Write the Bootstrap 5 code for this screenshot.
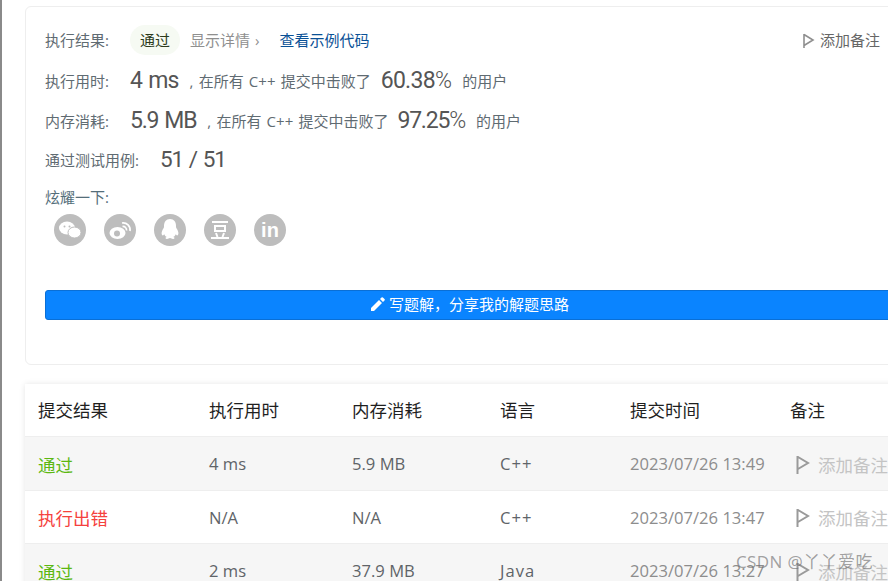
<!DOCTYPE html>
<html lang="zh-CN">
<head>
  <meta charset="UTF-8" />
  <meta name="viewport" content="width=device-width, initial-scale=1.0"/>
  <title>提交记录</title>
  <link href="https://cdn.jsdelivr.net/npm/bootstrap@5.3.3/dist/css/bootstrap.min.css" rel="stylesheet">
  <style>
    html, body { height: 581px; overflow: hidden; }
    body { background: #fff; font-family: "Open Sans", "Noto Sans CJK SC", sans-serif; color: #546e7a; font-size: 15px; border-left: 2px solid #8a8a8a; }
    .pagina { width: 1000px; margin-left: 23px; padding-top: 6px; position: relative; }
    .resultado { height: 359px; border: 1px solid #eeeeee; border-radius: 6px; padding: 13px 19px 0; }
    .fila { height: 40px; color: #5f6b72; }
    .fila-alta { padding-top: 2px; }
    .etiqueta { width: 85px; flex: none; }
    .etiqueta-larga { width: 115px; flex: none; }
    .dato { font-family: "Roboto", sans-serif; font-size: 23px; letter-spacing: -.9px; word-spacing: 1.500px; color: #555; }
    .dato.corto { font-size: 22.500px; letter-spacing: -1.200px; }
    .dato.mem { letter-spacing: -1.200px; }
    .pct { font-family: "Roboto", sans-serif; font-size: 23px; letter-spacing: -.7px; color: #555; margin: 0 11px 0 10px; }
    .pct.mem { letter-spacing: -1.200px; margin-left: 9px; }
    .pct i { font-style: normal; font-weight: 300; }
    .frase { margin-left: 11px; word-spacing: 1.300px; }
    .pastilla { background: #f6faf3; color: #2c3a1c; border-radius: 15px; width: 50px; height: 30px; line-height: 30px; text-align: center; }
    .detalle { color: #8f8f8f; margin-left: 10px; word-spacing: 1px; }
    .ejemplo { color: #0a5196; margin-left: 20px; }
    .nota { color: #666; margin-left: auto; margin-right: 125px; }
    .social { gap: 18px; padding-left: 9px; margin-top: 5px; }
    .presume { margin-top: 6px; }
    .circulo { width: 32px; height: 32px; border-radius: 50%; background: #bdbdbd; color: #fff; }
    .escribir { display: flex; width: 100%; height: 30px; margin-top: 44px; padding: 0; background: #0a84ff; border: 1px solid #0a6fd6; border-radius: 3px; color: #fff; font-size: 15px; padding-right: 111px; }
    .tabla-wrap { margin-top: 19px; box-shadow: 0 0 6px rgba(0,0,0,.1); background: #fff; }
    .cab, .reg { display: grid; grid-template-columns: 171px 143px 148px 130px 160px 1fr; padding-left: 13px; align-items: center; }
    .cab { height: 53px; color: #1f1f1f; font-size: 17.500px; border-bottom: 1px solid #eee; }
    .reg { height: 53.500px; padding-top: 3px; font-size: 16.600px; color: #5f6468; border-bottom: 1px solid #eee; }
    .reg.par { background: #f6f6f6; }
    .ok { color: #5cb811; font-size: 17.500px; }
    .mal { color: #f5413d; font-size: 17.500px; }
    .leng { letter-spacing: 1px; }
    .fecha { color: #8d8d8d; }
    .add { color: #c4c4c4; gap: 7px; padding-left: 5px; font-size: 17.500px; }
    .marca-agua { position: absolute; left: 711px; top: 549px; font-size: 17px; color: rgba(110,110,110,.65); letter-spacing: .4px; }
  </style>
</head>
<body>
  <div class="pagina">
    <div class="resultado bg-white">
      <div class="fila d-flex align-items-center">
        <span class="etiqueta">执行结果:</span>
        <span class="pastilla">通过</span>
        <span class="detalle">显示详情 ›</span>
        <span class="ejemplo">查看示例代码</span>
        <span class="nota d-flex align-items-center gap-1">
          <svg width="14" height="17" viewBox="0 0 14 17"><path d="M2 2v14M2 2.500l9 5.500-9 5.500" fill="none" stroke="#8f8f8f" stroke-width="1.600"/></svg>添加备注
        </span>
      </div>
      <div class="fila fila-alta d-flex align-items-center">
        <span class="etiqueta">执行用时:</span>
        <span class="dato">4 ms</span>
        <span class="frase">, 在所有 C++ 提交中击败了</span>
        <span class="pct">60.38<i>%</i></span>
        <span>的用户</span>
      </div>
      <div class="fila fila-alta d-flex align-items-center">
        <span class="etiqueta">内存消耗:</span>
        <span class="dato mem">5.9 MB</span>
        <span class="frase">, 在所有 C++ 提交中击败了</span>
        <span class="pct mem">97.25<i>%</i></span>
        <span>的用户</span>
      </div>
      <div class="fila d-flex align-items-center">
        <span class="etiqueta-larga">通过测试用例:</span>
        <span class="dato corto">51 / 51</span>
      </div>
      <div class="presume">炫耀一下:</div>
      <div class="social d-flex">
        <span class="circulo d-flex align-items-center justify-content-center">
          <svg width="22" height="18" viewBox="0 0 22 18" fill="#fff"><ellipse cx="8" cy="7" rx="8" ry="6.500"/><ellipse cx="15.500" cy="11.500" rx="6.500" ry="5.500" stroke="#bdbdbd"/><circle cx="5.500" cy="5.500" r="1" fill="#bdbdbd"/><circle cx="10.500" cy="5.500" r="1" fill="#bdbdbd"/></svg>
        </span>
        <span class="circulo d-flex align-items-center justify-content-center">
          <svg width="24" height="20" viewBox="0 0 24 20"><ellipse cx="9.500" cy="13" rx="8" ry="6" fill="#fff"/><circle cx="9" cy="13.500" r="3" fill="#bdbdbd"/><path d="M14 3a7 7 0 0 1 8 8M14.500 6.500a3.500 3.500 0 0 1 4 4" fill="none" stroke="#fff" stroke-width="1.700"/></svg>
        </span>
        <span class="circulo d-flex align-items-center justify-content-center">
          <svg width="20" height="23" viewBox="0 0 20 23" fill="#fff"><path d="M10 1c4 0 6 3 6 7 0 1 0 2 1 3 1 2 2 4 1 6-1 1-2 0-2-1-1 2-2 3-3 3 2 0 2 2 0 2-1 0-2-1-3-1s-2 1-3 1c-2 0-2-2 0-2-1 0-2-1-3-3 0 1-1 2-2 1-1-2 0-4 1-6 1-1 1-2 1-3 0-4 2-7 6-7z"/></svg>
        </span>
        <span class="circulo d-flex align-items-center justify-content-center">
          <svg width="18" height="20" viewBox="0 0 18 20" fill="none" stroke="#fff" stroke-width="2"><path d="M1 2h16M4 6h10v5H4zM5 13l1.500 4M13 13l-1.500 4M0 18h18"/></svg>
        </span>
        <span class="circulo d-flex align-items-center justify-content-center fw-bold text-white fs-5" style="font-family:'Liberation Sans',sans-serif">in</span>
      </div>
      <button class="escribir align-items-center justify-content-center gap-1" type="button">
        <svg width="15" height="15" viewBox="0 0 15 15" fill="#fff"><path d="M1 11l8-8 3 3-8 8H1zM10 2l1.500-1.500a1 1 0 0 1 1.400 0l1.600 1.600a1 1 0 0 1 0 1.400L13 5z"/></svg>
        写题解，分享我的解题思路
      </button>
    </div>

    <div class="tabla-wrap">
      <div class="cab"><span>提交结果</span><span>执行用时</span><span>内存消耗</span><span>语言</span><span>提交时间</span><span>备注</span></div>
      <div id="filas"></div>
    </div>
    <div class="marca-agua">CSDN @丫丫爱吃</div>
  </div>

  <script src="https://cdn.jsdelivr.net/npm/bootstrap@5.3.3/dist/js/bootstrap.bundle.min.js"></script>
  <script>
    const envios = [
      { r: "通过", c: "ok", t: "4 ms", m: "5.9 MB", l: "C++", f: "2023/07/26 13:49" },
      { r: "执行出错", c: "mal", t: "N/A", m: "N/A", l: "C++", f: "2023/07/26 13:47" },
      { r: "通过", c: "ok", t: "2 ms", m: "37.9 MB", l: "Java", f: "2023/07/26 13:27" }
    ];
    const filas = document.getElementById("filas");
    envios.forEach((e, i) => {
      const div = document.createElement("div");
      div.className = "reg" + (i % 2 === 0 ? " par" : "");
      div.innerHTML = `
        <span class="${e.c}">${e.r}</span>
        <span>${e.t}</span>
        <span>${e.m}</span>
        <span class="leng">${e.l}</span>
        <span class="fecha">${e.f}</span>
        <span class="add d-flex align-items-center">
          <svg width="16" height="20" viewBox="0 0 16 20"><path d="M2.500 1v18M3 2l10 6-10 6" fill="none" stroke="#9a9a9a" stroke-width="2"/></svg>添加备注
        </span>`;
      filas.appendChild(div);
    });
  </script>
</body>
</html>
